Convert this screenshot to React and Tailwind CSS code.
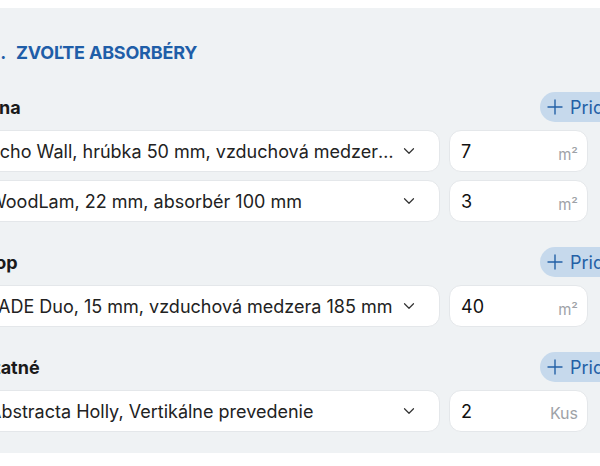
import React from 'react';
import { ChevronDown, Plus, Trash2 } from 'lucide-react';

const groups = [
  {
    title: 'Stena',
    items: [
      { name: 'Echo Wall, hrúbka 50 mm, vzduchová medzera 100 mm', qty: '7', unit: 'm²' },
      { name: 'WoodLam, 22 mm, absorbér 100 mm', qty: '3', unit: 'm²' },
    ],
  },
  {
    title: 'Strop',
    items: [{ name: 'FADE Duo, 15 mm, vzduchová medzera 185 mm', qty: '40', unit: 'm²' }],
  },
  {
    title: 'Ostatné',
    items: [{ name: 'Abstracta Holly, Vertikálne prevedenie', qty: '2', unit: 'Kus' }],
  },
];

function Row({ item }) {
  return (
    <div className="flex items-center">
      <div className="flex h-[42px] w-[467px] items-center rounded-xl border border-[#e4e7ea] bg-white pl-[15px] pr-[21px]">
        <span className="min-w-0 flex-1 truncate pr-[3px] text-[18px] text-[#222]">{item.name}</span>
        <ChevronDown size={18} strokeWidth={1.6} className="shrink-0 text-[#333]" />
      </div>
      <div className="ml-[9px] flex h-[42px] w-[139px] items-center justify-between rounded-xl border border-[#e4e7ea] bg-white pl-[11px] pr-[9px]">
        <span className="text-[18px] text-[#111]">{item.qty}</span>
        <span
          className={
            item.unit === 'Kus'
              ? 'mt-[4px] text-[16px] text-[#9ea2a7]'
              : 'mt-[8px] text-[15px] text-[#9ea2a7]'
          }
        >
          {item.unit}
        </span>
      </div>
      <div className="ml-[7px] flex w-[26px] justify-center">
        <Trash2 size={20} strokeWidth={1.4} className="text-[#d4d7db]" />
      </div>
    </div>
  );
}

export default function App() {
  return (
    <div className="h-[466px] w-[600px] overflow-hidden bg-white pt-2 font-['Inter',sans-serif]">
      <div className="h-[445px] bg-[#eff2f4] pt-[32px]">
        <div className="-ml-[27px] w-[648px]">
          <div className="flex h-[24px] items-center text-[18px] font-bold uppercase tracking-[-0.2px] text-[#1f5ea8]">
            <span className="w-[33px] text-right">2.</span>
            <span className="ml-[10px]">Zvoľte absorbéry</span>
          </div>

          <div className="mt-[28px] flex flex-col gap-[25px]">
            {groups.map((g) => (
              <div key={g.title}>
                <div className="flex h-[30px] items-center justify-between">
                  <h3 className="-ml-[3px] text-[18px] font-bold text-[#1a1a1a]">{g.title}</h3>
                  <button className="flex h-[30px] w-[81px] items-center gap-[3px] rounded-full bg-[#c6d9ec] pl-[3px] text-[18px] text-[#2360a6]">
                    <Plus size={24} strokeWidth={1.4} className="shrink-0" />
                    Pridať
                  </button>
                </div>
                <div className="mt-[8px] flex flex-col gap-[8px]">
                  {g.items.map((it) => (
                    <Row key={it.name} item={it} />
                  ))}
                </div>
              </div>
            ))}
          </div>
        </div>
      </div>
    </div>
  );
}
